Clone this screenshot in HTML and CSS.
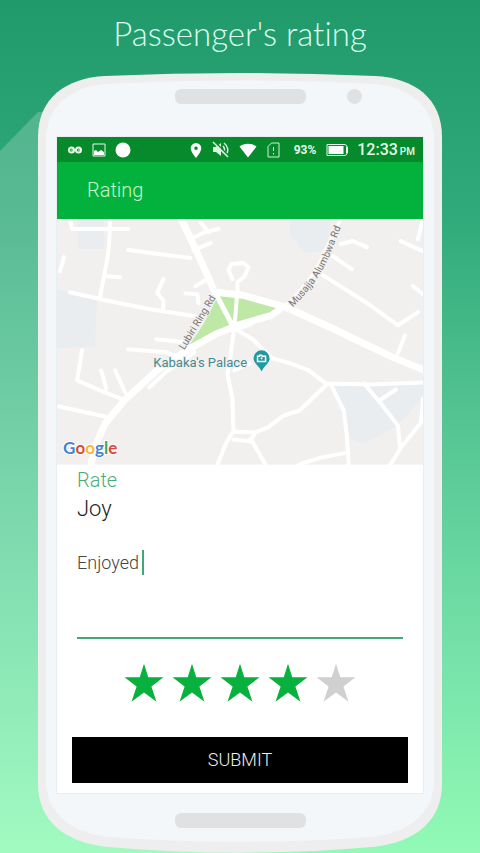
FILE: index.html
```html
<!DOCTYPE html>
<html lang="en">
<head>
<meta charset="utf-8">
<meta name="viewport" content="width=device-width, initial-scale=1">
<title>Passenger's rating</title>
<link rel="stylesheet" href="styles.css">
</head>
<body>
<main class="promo">
  <h1 class="promo-title">Passenger's rating</h1>
  <section class="phone">
    <svg class="shell" viewBox="0 0 404 780" preserveAspectRatio="none" aria-hidden="true">
      <path fill="#efeeee" d="M0 64C0 25 28 5 67 3Q202-3 337 3C376 5 404 25 404 64V711C404 748 378 769 337 774Q202 786 67 774C26 769 0 748 0 711Z"/>
      <path fill="#f4f7fa" d="M8 68C8 34 31 14 68 11Q202 4 336 11C373 14 396 34 396 68V707C396 739 373 759 336 764Q202 774 68 764C31 759 8 739 8 707Z"/>
    </svg>
    <div class="earpiece"><span class="bar"></span><span class="camera"></span></div>
    <div class="screen">
      <div class="status">
        <div class="status-group">
          <svg width="16" height="16" viewBox="0 0 16 16" fill="none" stroke="#e8fbea" stroke-width="2"><circle cx="4.500" cy="8" r="2.500"/><circle cx="11.500" cy="8" r="2.500"/><path stroke-width="1" d="M4 8h3M11 8h3"/></svg>
          <svg class="picture" width="14" height="14" viewBox="0 0 14 14"><path fill="none" stroke="#e8fbea" d="M1 1h12v12H1z"/><path fill="#fff" d="M2 12V8l2-1 2 2 3-2 3 2v3z"/></svg>
          <svg width="16" height="16" viewBox="0 0 16 16"><circle cx="8" cy="8" r="7.500" fill="#fff"/></svg>
        </div>
        <div class="status-group status-right">
          <svg width="12" height="16" viewBox="0 0 12 16"><path fill="#fff" fill-rule="evenodd" d="M6 1a5.300 5.300 0 0 0-5.300 5.300C.7 10 6 16 6 16s5.300-6 5.300-9.700A5.300 5.300 0 0 0 6 1zm0 3.500a1.800 1.800 0 1 1 0 3.600 1.800 1.800 0 0 1 0-3.600z"/></svg>
          <svg class="mute" width="17" height="17" viewBox="0 0 17 17" fill="none" stroke="#dff5e2" stroke-width="1.500"><path fill="#dff5e2" stroke="none" d="M1 6h3l5-4v13l-5-4H1z"/><path d="M11 5c2 2 2 5 0 7M12 2c4 3 5 8 2 12"/><path stroke="#078a2b" d="M2 0l15 15"/><path d="M1 1l15 15"/></svg>
          <svg width="18" height="16" viewBox="0 0 18 16"><path fill="#fff" d="M9 15.500L.5 4.500C5 .7 13 .7 17.500 4.500z"/></svg>
          <svg class="sim" width="13" height="16" viewBox="0 0 13 16" fill="none" stroke="#d5f0d8"><path d="M4.500 1H12v14H1V4.500z"/><path d="M6.500 5v4M6.500 11v1.500"/></svg>
          <span class="percent">93%</span>
          <svg width="23" height="14" viewBox="0 0 23 14"><path fill="none" stroke="#e8fbea" d="M1 1.500h18l2 1.500v8l-2 1.500H1z"/><path fill="#fff" d="M2.500 3h15v8h-15z"/><path fill="#e8fbea" d="M20 4h2v6h-2z"/></svg>
          <span class="clock">12:33<small>PM</small></span>
        </div>
      </div>
      <header class="appbar">Rating</header>
      <svg class="map" viewBox="57 219 365 245" preserveAspectRatio="xMidYMid slice" role="img" aria-label="Map around Kabaka's Palace">
        <defs><path id="musajja" d="M292 307Q320 280 332 248T348 212"/></defs>
        <rect x="57" y="219" width="365" height="245" fill="#f2f0ee"/>
        <path fill="#e9edf0" d="M57 290l40 7-2 49-38 2zM78 219h26v30H78zM290 219h41l-7 32-20 2-15-18zM334 386l88-3v13l-24 28-34 19-16-5-5-25z"/>
        <path fill="#bfe8a7" d="M220 295h19l39 12-10 7-36 12-45 22 16-24 13-25z"/>
        <g fill="none" stroke="#fff" stroke-linejoin="round" stroke-linecap="round">
          <path stroke-width="7" d="M180 217l17 36 17 38M216 292l26 3 43 12 40 18 65 31 36 15M282 307l-11 8-31 9-25 10-27 15-30 20-33 30-20 24-8 18-7 26"/>
          <path stroke-width="5" d="M214 291l19 36"/>
          <path stroke-width="4" d="M70 219l2 10h56M110 219l-1 26-2 15-7 36M107 276l13 1M128 250l62 8M70 292l40 9 40 8 45 7M192 238l13-6 13-3M200 222l8 10M193 250l17-7M195 286l10-6M163 279l-6 14 6 7v10M185 293l12 1 1 9M60 271l4-14"/>
          <path stroke-width="4" d="M232 279l-4-9 3-6 12-1 5 4-4 9-7 6v8l-3 36-4 30-3 18 5 24 1 32-8 14-8 20M233 431l21 1 13-5 16-12 16-5 27-26M233 439l17 2 4-8M250 438l15 26M232 327l20 12 20 19 18 5 18 7 17 13 44 1 53-2"/>
          <path stroke-width="4" d="M331 386l12 24 3 25 2 30M346 452l-26 5-22 7M363 383l17 20 17 22 2 22M380 399l15-10M422 398l-2 24-20 25-11 18M340 244l12-3 14 6M332 256l19 13M322 275l43 27 32 23 20-13M400 241l22 10M422 219l-5 20M412 286l10 8M404 335l-7 18"/>
          <path stroke-width="4" d="M82 350l-5 30 23 10 20 8M101 370l5 18M115 370l10 22M59 406l46 10M128 349l38 3 15 6M156 339l28 3M149 387l16-15 29-20M232 330l18-6M234 370l15-7"/>
          <path stroke-width="3" d="M283 307q30-27 42-58l15-30"/>
        </g>
        <g class="road-name"><text transform="translate(184 350) rotate(-59)">Lubiri Ring Rd</text><text><textPath href="#musajja">Musajja Alumbwa Rd</textPath></text></g>
        <text class="place" x="153" y="367">Kabaka's Palace</text>
        <path fill="#2199a0" d="M261 350a8 8 0 0 0-8 8c0 5 5 7 8 13 3-6 8-8 8-13a8 8 0 0 0-8-8z"/>
        <path fill="none" stroke="#fff" stroke-width="1.500" d="M257 356v5h8v-5h-3l-1-1h-2v1z"/><circle cx="261" cy="358" r="1" fill="#fff"/>
        <text class="google" x="63" y="453"><tspan fill="#4285d4">G</tspan><tspan fill="#d9483b">o</tspan><tspan fill="#eebb35">o</tspan><tspan fill="#4285d4">g</tspan><tspan fill="#3fa45b">l</tspan><tspan fill="#d9483b">e</tspan></text>
      </svg>
      <form class="rating">
        <div class="fields">
          <label class="caption" for="comment">Rate</label>
          <p class="name">Joy</p>
          <div class="comment-box">
            <textarea id="comment" class="comment">Enjoyed</textarea>
            <span class="caret"></span>
          </div>
          <div class="stars" role="radiogroup" aria-label="Stars">
            <input class="star on" type="radio" name="stars" value="1" aria-label="1 star">
            <input class="star on" type="radio" name="stars" value="2" aria-label="2 stars">
            <input class="star on" type="radio" name="stars" value="3" aria-label="3 stars">
            <input class="star on" type="radio" name="stars" value="4" aria-label="4 stars" checked>
            <input class="star" type="radio" name="stars" value="5" aria-label="5 stars">
          </div>
        </div>
        <button class="submit" type="button">SUBMIT</button>
      </form>
    </div>
    <div class="home"><span class="bar"></span></div>
  </section>
</main>
</body>
</html>
```
FILE: styles.css
```css
* {
  box-sizing: border-box;
}

body {
  margin: 0;
  font-family: Roboto, "Liberation Sans", sans-serif;
}

.promo {
  position: relative;
  min-height: 100vh;
  padding: 13px 38px 0;
  overflow: hidden;
  background: linear-gradient(#209a6b, #30aa7a 25%, #55c593 50%, #74e0a8 75%, #92fab6);
}

/* Pale beam that falls from the phone's upper left corner */
.promo::before {
  content: "";
  position: absolute;
  inset: 112px 50% 0 0;
  background: linear-gradient(rgba(255, 255, 255, 0.2), rgba(255, 255, 255, 0.14));
  clip-path: polygon(38px 0, 100% 0, 100% 100%, 0 100%, 0 39px);
}

.promo-title {
  margin: 0;
  color: #dcfff2;
  font: 300 33px/40px Lato, sans-serif;
  font-variant-ligatures: none;
  text-align: center;
}

.phone {
  position: relative;
  margin-top: 20px;
  padding: 0 19px;
}

.shell {
  position: absolute;
  inset: 0;
  width: 100%;
  height: 100%;
}

.earpiece,
.home {
  position: relative;
  display: flex;
  justify-content: center;
}

.earpiece {
  height: 64px;
  padding-top: 16px;
}

.home {
  height: 60px;
  padding: 20px 0;
}

.bar {
  width: 131px;
  height: 15px;
  border-radius: 6px;
  background: #e0e1e2;
}

.camera {
  position: absolute;
  top: 16px;
  right: 61px;
  width: 15px;
  height: 15px;
  border-radius: 50%;
  background: #e0e1e2;
}

.screen {
  position: relative;
  background: #fff;
  box-shadow: 0 0 0 1px #e9eef0;
}

.status {
  display: flex;
  justify-content: space-between;
  height: 25px;
  padding: 0 8px 0 10px;
  background: #078a2b;
  color: #e8fbea;
}

.status-group {
  display: flex;
  align-items: center;
  gap: 9px;
}

.status-right {
  gap: 10px;
}

.percent {
  margin-left: 4px;
  font-size: 12px;
  font-weight: 700;
}

.clock {
  display: flex;
  align-items: baseline;
  gap: 2px;
  margin-left: -2px;
  font-size: 16px;
  font-weight: 500;
}

.clock small {
  font-size: 10px;
}

.appbar {
  padding: 0 30px;
  background: #03b23c;
  color: #c5f5c9;
  font-size: 20px;
  font-weight: 300;
  line-height: 57px;
}

.map {
  display: block;
  width: 100%;
}

.road-name {
  fill: #777;
  stroke: #f2f0ee;
  stroke-width: 2px;
  paint-order: stroke;
  font-size: 10px;
}

.place {
  fill: #438b92;
  stroke: #f2f0ee;
  stroke-width: 2px;
  paint-order: stroke;
  font-size: 13px;
}

.google {
  stroke: #fff;
  stroke-width: 2px;
  paint-order: stroke;
  font: 700 17px Lato, sans-serif;
}

.rating {
  padding: 3px 15px 10px;
}

.fields {
  padding: 0 5px;
}

.caption {
  display: block;
  color: #4bad76;
  font-size: 20px;
  font-weight: 300;
  line-height: 24px;
}

.name {
  margin: 0;
  color: #222;
  font-size: 22px;
  font-weight: 300;
  line-height: 34px;
}

.comment-box {
  position: relative;
  margin-top: 18px;
}

.comment {
  display: block;
  width: 100%;
  height: 95px;
  padding: 6px 0;
  border: 0;
  border-bottom: 2px solid #43a878;
  outline: 0;
  resize: none;
  background: none;
  color: #444;
  font: 300 18px/26px Roboto, sans-serif;
}

.caret {
  position: absolute;
  top: 6px;
  left: 65px;
  width: 2px;
  height: 25px;
  background: #3fa878;
}

.stars {
  display: flex;
  justify-content: center;
  gap: 9px;
  padding: 25px 0 35px;
}

.star {
  width: 39px;
  height: 38px;
  margin: 0;
  appearance: none;
  background: #d0d0d0;
  clip-path: polygon(50% 0, 61% 36%, 100% 36%, 69% 60%, 82% 100%, 50% 76%, 18% 100%, 31% 60%, 0 36%, 39% 36%);
}

.star.on {
  background: #08b13e;
}

.submit {
  display: block;
  width: 100%;
  height: 46px;
  border: 0;
  background: #000;
  color: #eee;
  font: 300 18px Roboto, sans-serif;
}
```
